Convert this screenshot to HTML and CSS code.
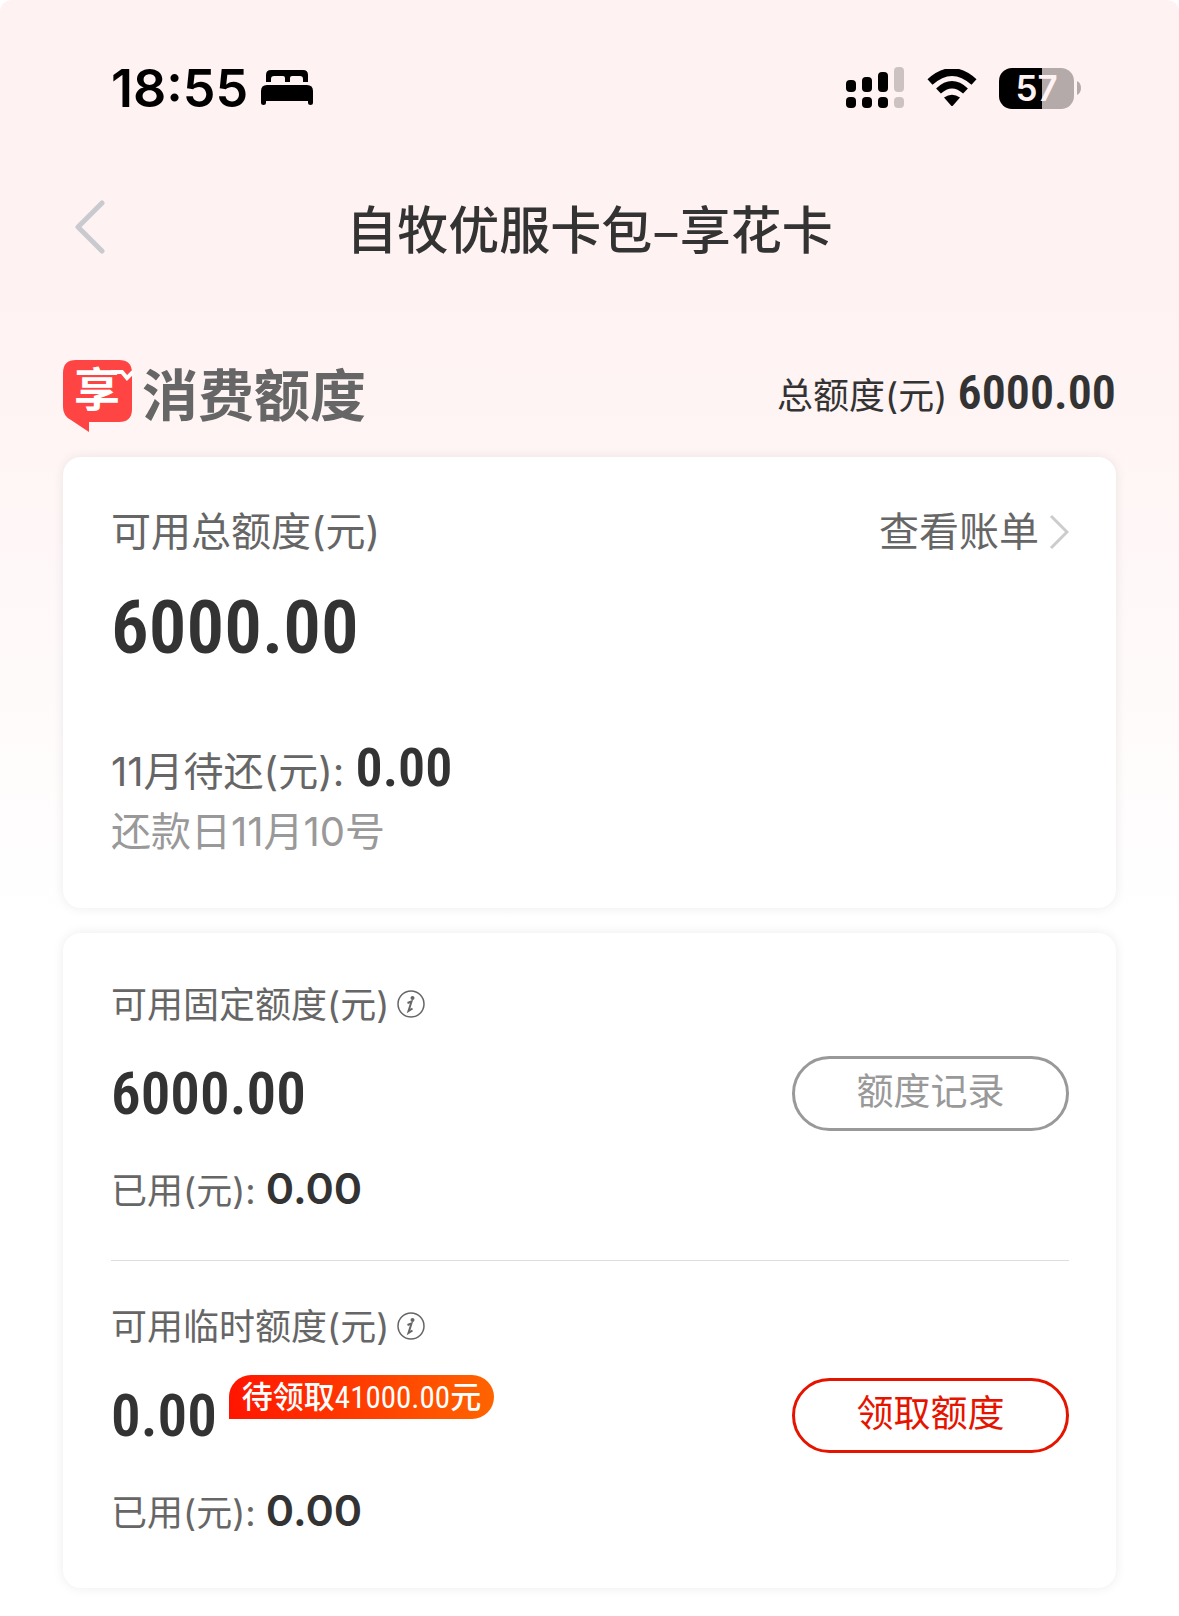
FILE: index.html
```
<!DOCTYPE html>
<html lang="zh-CN">
<head>
    <meta charset="UTF-8">
    <meta name="viewport" content="width=device-width, initial-scale=1.0">
    <title>自牧优服卡包–享花卡</title>
    <link rel="stylesheet" href="styles.css">
</head>
<body>
    <!-- 状态栏 -->
    <div class="status-bar">
        <div class="status-left">
            <span class="time">18:55</span>
            <svg class="bed" width="52" height="36" viewBox="0 0 52 36">
                <path d="M5 12V5q0-5 5-5h32q5 0 5 5v7h-5V9q0-3-3-3h-8q-2 0-2 2v4h-5V8q0-2-2-2h-9q-3 0-3 3v3z"/>
                <path d="M0 21q0-6 6-6h40q6 0 6 6v12q0 2-2.500 2t-2.500-2v-2H5v2q0 2-2.500 2t-2.500-2z"/>
            </svg>
        </div>
        <div class="status-right">
            <svg width="58" height="42" viewBox="0 0 58 42">
                <rect x="0" y="13" width="10" height="12" rx="4"/>
                <rect x="16" y="10" width="10" height="15" rx="4"/>
                <rect x="32" y="5" width="10" height="20" rx="4"/>
                <rect x="0" y="30" width="10" height="11" rx="4"/>
                <rect x="16" y="30" width="10" height="11" rx="4"/>
                <rect x="32" y="30" width="10" height="11" rx="4"/>
                <rect x="48" y="0" width="10" height="25" rx="4" fill="#cdc2c2"/>
                <rect x="48" y="30" width="10" height="11" rx="4" fill="#cdc2c2"/>
            </svg>
            <svg class="wifi" width="50" height="38" viewBox="0 0 50 38">
                <path d="M3 13Q25-7 47 13" fill="none" stroke="#000" stroke-width="7.500"/>
                <path d="M11.500 22Q25 9.500 38.500 22" fill="none" stroke="#000" stroke-width="7"/>
                <path d="M17 28.500Q25 23 33 28.500L26 36.500q-1 1-2 0z"/>
            </svg>
            <div class="battery"><span class="battery-level">57</span></div>
            <svg class="battery-tip" width="4" height="14" viewBox="0 0 4 14">
                <path d="M0 0q4 2 4 7t-4 7z" fill="#b4aaaa"/>
            </svg>
        </div>
    </div>

    <!-- 标题栏 -->
    <header class="nav">
        <button class="back" aria-label="返回">
            <svg width="32" height="56" viewBox="0 0 32 56">
                <path d="M29 4L5 28l24 24" fill="none" stroke="#c8cacf" stroke-width="5" stroke-linecap="round" stroke-linejoin="round"/>
            </svg>
        </button>
        <h1>自牧优服卡包–享花卡</h1>
    </header>

    <main>
        <div class="quota-head">
            <svg class="logo" width="70" height="72" viewBox="0 0 70 72">
                <path d="M13 0h43q13 0 13 13v36q0 13-13 13H26v10L8 60Q0 56 0 47V13Q0 0 13 0z" fill="#ff4444"/>
                <text class="logo-text" x="11" y="46">享</text>
                <path d="M48 12h11l5 6 6-6" fill="none" stroke="#fff" stroke-width="4"/>
            </svg>
            <h2>消费额度</h2>
            <p class="total">总额度(元) <span class="num num-s">6000.00</span></p>
        </div>

        <!-- 可用总额度 -->
        <section class="card">
            <div class="row">
                <span class="label-l">可用总额度(元)</span>
                <a href="#" class="bill">查看账单
                    <svg width="20" height="36" viewBox="0 0 20 36">
                        <path d="M2 2l16 16L2 34" fill="none" stroke="#ccc" stroke-width="3"/>
                    </svg>
                </a>
            </div>
            <p class="num num-xl">6000.00</p>
            <p class="repay">11月待还(元): <span class="num num-m">0.00</span></p>
            <p class="date">还款日11月10号</p>
        </section>

        <!-- 固定额度 / 临时额度 -->
        <section class="card">
            <div class="quota">
                <div class="label">可用固定额度(元)
                    <svg class="info" width="28" height="28" viewBox="0 0 28 28">
                        <circle cx="14" cy="14" r="13" fill="none" stroke="#666" stroke-width="1.500"/>
                        <circle cx="15.500" cy="8" r="2" fill="#666"/>
                        <path d="M10.500 13l4-1.500-3 9.500 4-2.500" fill="none" stroke="#666" stroke-width="2"/>
                    </svg>
                </div>
                <div class="row amount">
                    <span class="num num-l">6000.00</span>
                    <button class="btn">额度记录</button>
                </div>
                <p class="used">已用(元): <b>0.00</b></p>
            </div>
            <div class="quota">
                <div class="label">可用临时额度(元)
                    <svg class="info" width="28" height="28" viewBox="0 0 28 28">
                        <circle cx="14" cy="14" r="13" fill="none" stroke="#666" stroke-width="1.500"/>
                        <circle cx="15.500" cy="8" r="2" fill="#666"/>
                        <path d="M10.500 13l4-1.500-3 9.500 4-2.500" fill="none" stroke="#666" stroke-width="2"/>
                    </svg>
                </div>
                <div class="row amount">
                    <span class="num num-l">0.00</span>
                    <span class="tag">待领取<span class="num">41000.00</span>元</span>
                    <button class="btn btn-red">领取额度</button>
                </div>
                <p class="used">已用(元): <b>0.00</b></p>
            </div>
        </section>
    </main>
</body>
</html>
```
FILE: styles.css
```
* {
    box-sizing: border-box;
    margin: 0;
    padding: 0;
}
html {
    background: #fff;
}
body {
    font-family: Inter, "Noto Sans CJK SC", sans-serif;
    color: #333;
    background: #fff linear-gradient(#fff2f2 0, #fff2f2 300px, #fff 920px) no-repeat;
    border-radius: 12px 12px 0 0;
}
svg {
    display: block;
    flex-shrink: 0;
}
button {
    font-family: inherit;
    background: none;
    border: none;
}

/* 状态栏 */
.status-bar {
    display: flex;
    justify-content: space-between;
    align-items: center;
    height: 176px;
    padding: 0 98px 0 111px;
    color: #000;
}
.status-left, .status-right {
    display: flex;
    align-items: center;
}
.time {
    font-size: 52px;
    font-weight: 600;
}
.bed {
    margin-left: 13px;
}
.wifi {
    margin: 0 22px 0 23px;
}
.battery {
    width: 75px;
    height: 41px;
    border-radius: 13px;
    background: linear-gradient(to right, #000 57%, #b4aaaa 57%);
    text-align: center;
}
.battery-level {
    font-size: 35px;
    font-weight: 600;
    line-height: 41px;
    color: #fff2f2;
}
.battery-tip {
    margin-left: 3px;
}

/* 标题栏 */
.nav {
    display: grid;
    grid-template-columns: 1fr auto 1fr;
    align-items: center;
    height: 102px;
    padding: 0 73px;
}
.back {
    justify-self: start;
}
.nav h1 {
    font-family: "Noto Sans CJK SC", sans-serif;
    font-size: 51px;
    font-weight: 500;
}

main {
    padding: 0 63px 27px;
}
.quota-head {
    display: flex;
    align-items: center;
    height: 126px;
    margin-top: 53px;
}
.logo {
    margin-top: 4px;
    overflow: visible;
}
.logo-text {
    font-size: 46px;
    font-weight: 700;
    fill: #fff;
}
.quota-head h2 {
    margin: 4px 0 0 9px;
    font-size: 56px;
    font-weight: 700;
    line-height: 60px;
    color: #666;
}
.total {
    margin: 4px 0 0 auto;
    font-size: 36px;
    line-height: 60px;
}

/* 数字 */
.num {
    font-family: "Roboto Condensed", Roboto, sans-serif;
    font-weight: 600;
    line-height: 1;
    color: #333;
}
.num-s {
    font-size: 48px;
}
.num-m {
    font-size: 54px;
}
.num-l {
    font-size: 59px;
}
.num-xl {
    margin-top: 25px;
    font-size: 75px;
    line-height: 84px;
}

/* 卡片 */
.card {
    margin-bottom: 25px;
    padding: 47px 47px 46px 48px;
    border-radius: 18px;
    background: #fff;
    box-shadow: 0 0 12px rgba(0, 0, 0, 0.08);
}
.card:last-child {
    margin-bottom: 0;
}
.row {
    display: flex;
    justify-content: space-between;
    align-items: center;
}
.label-l, .bill {
    font-size: 40px;
    line-height: 56px;
    color: #666;
}
.bill {
    display: flex;
    align-items: center;
    gap: 10px;
    text-decoration: none;
}
.repay {
    margin-top: 72px;
    font-size: 40px;
    line-height: 60px;
    color: #666;
}
.date {
    font-size: 40px;
    line-height: 60px;
    color: #999;
}

.quota + .quota {
    margin-top: 40px;
    padding-top: 41px;
    border-top: 1px solid #ddd;
}
.label {
    display: flex;
    align-items: center;
    gap: 8px;
    font-size: 36px;
    line-height: 50px;
    color: #666;
}
.info {
    margin-bottom: 2px;
}
.amount {
    height: 76px;
    margin-top: 25px;
}
.btn {
    width: 277px;
    height: 75px;
    margin-left: auto;
    padding-bottom: 3px;
    border: 3px solid #999;
    border-radius: 38px;
    font-size: 37px;
    line-height: 60px;
    color: #999;
}
.btn-red {
    border-color: #e51400;
    color: #e51400;
}
.tag {
    align-self: flex-start;
    height: 44px;
    margin: -2px 0 0 12px;
    padding: 0 13px;
    border-radius: 22px 22px 22px 0;
    background: linear-gradient(to right, #ff1500, #ff6400);
    font-size: 31px;
    font-weight: 500;
    line-height: 44px;
    color: #fff;
}
.tag .num {
    font-weight: 400;
    color: #fff;
}
.used {
    margin-top: 31px;
    font-size: 36px;
    line-height: 58px;
    color: #666;
}
.used b {
    font-size: 43px;
    font-weight: 600;
    line-height: 1;
    color: #333;
}
```
